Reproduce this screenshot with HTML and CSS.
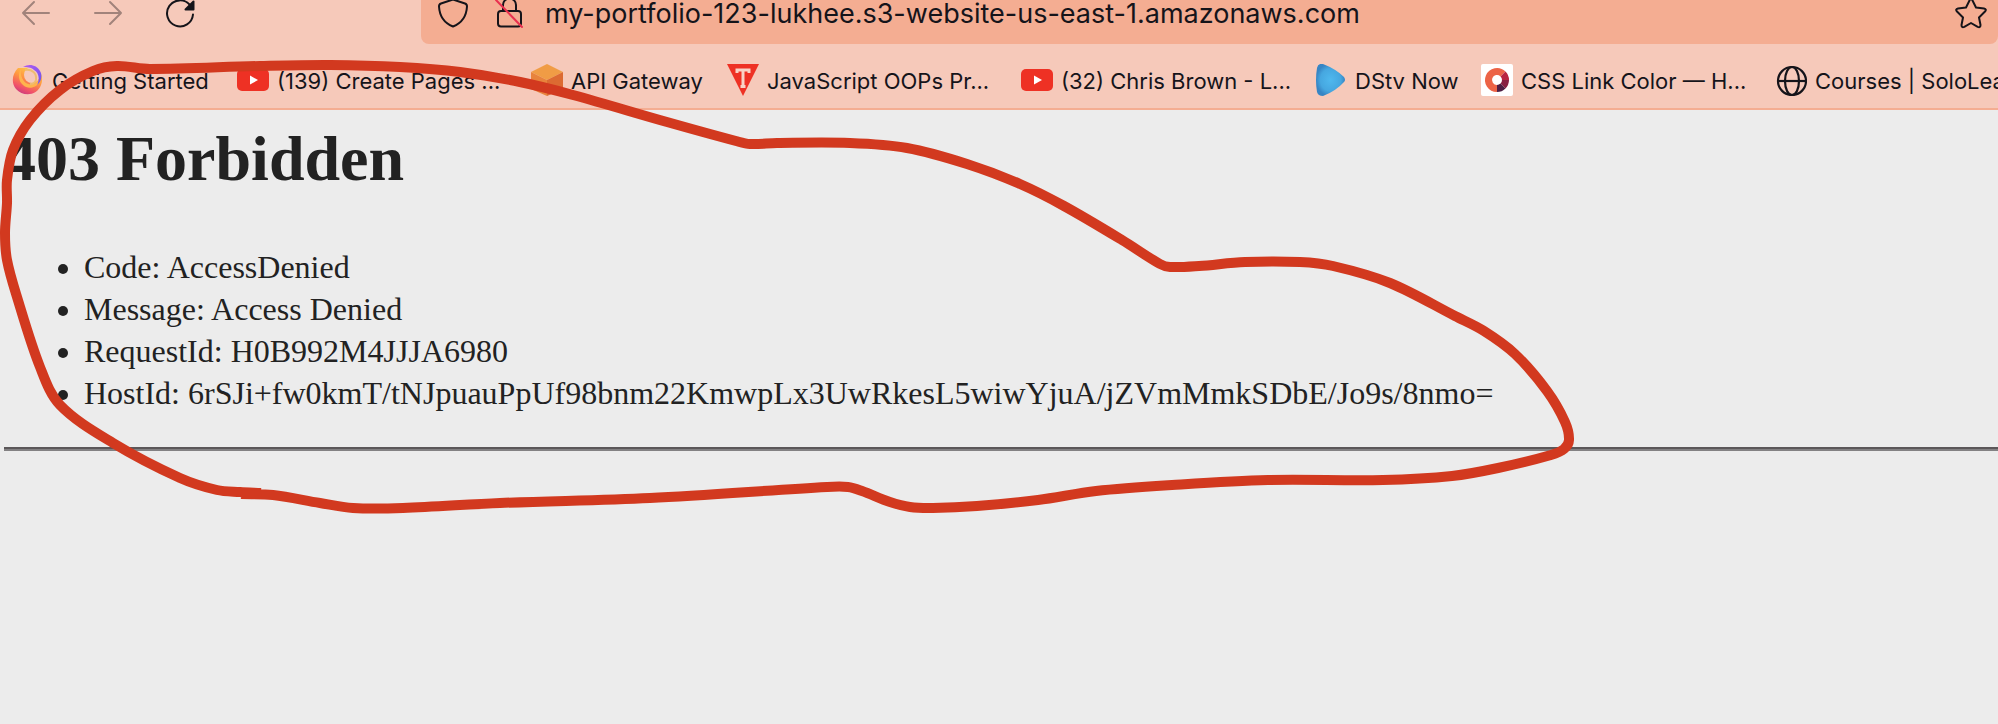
FILE: index.html
```html
<!DOCTYPE html>
<html lang="en">
<head>
<meta charset="utf-8">
<title>403 Forbidden</title>
<link rel="stylesheet" href="styles.css">
</head>
<body>
<header class="chrome">
  <div class="toolbar">
    <nav class="nav" aria-label="History">
      <button class="nav-btn dim" type="button" aria-label="Back"><svg width="32" height="32" viewBox="0 0 32 32"><path d="M29 16H3M14 5L3 16l11 11"/></svg></button>
      <button class="nav-btn dim" type="button" aria-label="Forward"><svg width="32" height="32" viewBox="0 0 32 32"><path d="M3 16h26M18 5l11 11-11 11"/></svg></button>
      <button class="nav-btn" type="button" aria-label="Reload"><svg width="32" height="32" viewBox="0 0 32 32"><path d="M29 17.500A13 13 0 1 1 26 8"/><path class="solid" d="M29.500 4.500v8h-8z"/></svg></button>
    </nav>
    <div class="urlbar">
      <button class="url-btn" type="button" aria-label="Tracking protection"><svg width="32" height="32" viewBox="0 0 32 32"><path d="M16 2.500L28 6.500c1.500.5 2 1.300 2 3C29.500 18 25 26 16 29.500 7 26 2.500 18 2 9.500c0-1.700.5-2.500 2-3z"/></svg></button>
      <button class="url-btn" type="button" aria-label="Connection not secure"><svg width="32" height="32" viewBox="0 0 32 32"><rect x="5" y="14" width="23" height="15.500" rx="3"/><path d="M10 14V8a6.500 6.500 0 0 1 13 0v6"/><path class="slash" d="M3 3l26 27"/></svg></button>
      <input class="url" type="text" aria-label="Address" value="my-portfolio-123-lukhee.s3-website-us-east-1.amazonaws.com">
      <button class="url-btn" type="button" aria-label="Bookmark this page"><svg width="32" height="32" viewBox="0 0 32 32"><path d="M14.500 3.500q1.500-3 3 0l3.500 7 8 1q3 .7 1 3l-6 6 1.500 7.500q0 3-2.800 1.800L16 26l-6.700 3.800q-2.800 1.200-2.800-1.800L8 20.500l-6-6q-2-2.300 1-3l8-1z"/></svg></button>
    </div>
  </div>
  <nav class="bookmarks" aria-label="Bookmarks">
    <a class="bookmark wide" href="#">
      <svg class="icon" width="32" height="32" viewBox="0 0 32 32"><defs><linearGradient id="fox" x1=".8" y1="0" x2=".3" y2="1"><stop offset="0" stop-color="#ffd84a"/><stop offset=".45" stop-color="#ff9640"/><stop offset=".8" stop-color="#f0506a"/><stop offset="1" stop-color="#c93a80"/></linearGradient><linearGradient id="swirl" x1="0" y1="0" x2="1" y2="1"><stop offset="0" stop-color="#b45cf0"/><stop offset="1" stop-color="#6c54f0"/></linearGradient></defs><path fill="url(#fox)" d="M6 4C0 10-1 19 4 25c7 8 21 7 25-4 2-5 1-10-1-13-3-4-12-5-16-4z"/><circle cx="20" cy="11" r="8" fill="#f6c9ba"/><path fill="#ffb44d" d="M9 5c-1 5 1 11 5 14 5 3 10 1 13-4l1 2c-3 7-12 9-17 4C6 17 6 9 9 5z"/><path fill="url(#swirl)" d="M11 3c6-4 14-2 17 4 3 5 1 11-3 14 3-6 2-12-3-15-3-3-7-3-11-3z"/><path d="M13 6c7-1 12 3 11 10-1 3-3 4-6 4" fill="none" stroke="#eebd71" stroke-width="2"/></svg>
      <span>Getting Started</span></a>
    <a class="bookmark long" href="#">
      <svg class="icon" width="32" height="32" viewBox="0 0 32 32"><rect y="5" width="32" height="22" rx="5" fill="#ee3124"/><path d="M13 11.500v9l8-4.500z" fill="#fff"/></svg>
      <span>(139) Create Pages ...</span></a>
    <a class="bookmark mid" href="#">
      <svg class="icon" width="32" height="32" viewBox="0 0 32 32"><path fill="#f09c45" d="M16 0l16 8-16 8L0 8z"/><path fill="#e8833c" d="M0 8l16 8v16L0 25z"/><path fill="#dc6a32" d="M32 8l-16 8v16l16-7z"/></svg>
      <span>API Gateway</span></a>
    <a class="bookmark long" href="#">
      <svg class="icon" width="32" height="32" viewBox="0 0 32 32"><path fill="#ee3124" d="M0 0h32L16 32z"/><path d="M10 9V6h12v3M16 6v17M13.500 22.500h5" fill="none" stroke="#f8d3c6" stroke-width="3"/></svg>
      <span>JavaScript OOPs Pr...</span></a>
    <a class="bookmark long" href="#">
      <svg class="icon" width="32" height="32" viewBox="0 0 32 32"><rect y="5" width="32" height="22" rx="5" fill="#ee3124"/><path d="M13 11.500v9l8-4.500z" fill="#fff"/></svg>
      <span>(32) Chris Brown - L...</span></a>
    <a class="bookmark small" href="#">
      <svg class="icon" width="32" height="32" viewBox="0 0 32 32"><defs><radialGradient id="sky"><stop offset="0" stop-color="#4fb8ee"/><stop offset=".7" stop-color="#46a7e0"/><stop offset="1" stop-color="#3785c4"/></radialGradient></defs><path fill="url(#sky)" d="M2 4q1-5 6-4 13 5 21 13 2 3 0 5Q21 27 8 32q-5 0-6-4Q0 16 2 4z"/></svg>
      <span>DStv Now</span></a>
    <a class="bookmark long" href="#">
      <svg class="icon" width="32" height="32" viewBox="0 0 32 32"><rect width="32" height="32" rx="2" fill="#fff"/><g fill="none" stroke-width="7"><path stroke="#ec6346" d="M16 24.500A8.500 8.500 0 1 1 22 10"/><path stroke="#b9243f" d="M22 10a8.500 8.500 0 0 1 2.500 6"/><path stroke="#871f42" d="M24.500 16a8.500 8.500 0 0 1-2.500 6"/><path stroke="#4c1d43" d="M22 22a8.500 8.500 0 0 1-6 2.500"/></g></svg>
      <span>CSS Link Color — H...</span></a>
    <a class="bookmark" href="#">
      <svg class="icon" width="32" height="32" viewBox="0 0 32 32"><g fill="none" stroke="#15141a" stroke-width="2.200"><circle cx="17" cy="17" r="14"/><ellipse cx="17" cy="17" rx="7" ry="14"/><path d="M3 17h28"/></g></svg>
      <span>Courses | SoloLearn</span></a>
  </nav>
</header>
<main class="page">
  <h1>403 Forbidden</h1>
  <ul>
    <li>Code: AccessDenied</li>
    <li>Message: Access Denied</li>
    <li>RequestId: H0B992M4JJJA6980</li>
    <li>HostId: 6rSJi+fw0kmT/tNJpuauPpUf98bnm22KmwpLx3UwRkesL5wiwYjuA/jZVmMmkSDbE/Jo9s/8nmo=</li>
  </ul>
  <hr>
</main>
<svg class="marker" width="1600" height="540" viewBox="0 0 1600 540" aria-hidden="true"><path id="stroke"/></svg>
<script src="marker.js"></script>
</body>
</html>
```

FILE: styles.css
```css
* {
  box-sizing: border-box;
}

body {
  margin: 0;
  min-height: 100vh;
  position: relative;
  overflow-x: hidden;
  background: #ececec;
  color: #222;
  font-family: "Liberation Serif", "Times New Roman", serif;
  font-size: 32px;
}

.chrome {
  background: #f6c9ba;
  border-bottom: 2px solid #f4ad92;
  color: #15141a;
  font-family: Inter, "Liberation Sans", sans-serif;
}

.toolbar {
  display: flex;
  height: 44px;
}

.nav {
  flex: none;
  display: flex;
  gap: 40px;
  width: 421px;
  height: 26px;
  padding-left: 20px;
  align-items: center;
}

button {
  flex: none;
  width: 32px;
  height: 32px;
  padding: 0;
  border: 0;
  background: none;
  color: inherit;
}

button svg {
  display: block;
  fill: none;
  stroke: currentColor;
  stroke-width: 2;
  stroke-linecap: round;
  stroke-linejoin: round;
}

.dim {
  color: #a1837b;
}

.solid {
  fill: currentColor;
}

.slash {
  stroke: #e9304f;
}

.urlbar {
  flex: 1;
  min-width: 0;
  display: flex;
  align-items: center;
  gap: 20px;
  padding: 0 11px 18px 16px;
  background: #f4ad92;
  border-radius: 0 0 8px 8px;
}

.url-btn + .url-btn {
  margin-left: 4px;
}

.url {
  flex: 1;
  min-width: 0;
  height: 36px;
  padding: 1px 0 0;
  border: 0;
  background: none;
  color: inherit;
  font: 27px/35px Inter, "Liberation Sans", sans-serif;
}

.bookmarks {
  display: flex;
  height: 64px;
  padding: 8px 0 0 12px;
  align-items: center;
  overflow: hidden;
  font-size: 22px;
  line-height: 34px;
}

.bookmark {
  flex: none;
  display: flex;
  gap: 8px;
  height: 32px;
  color: inherit;
  text-decoration: none;
  white-space: nowrap;
}

.icon {
  flex: none;
}

.long {
  width: 294px;
}

.wide {
  width: 225px;
}

.mid {
  width: 196px;
}

.small {
  width: 166px;
}

.page {
  padding: 11px 0 12px 4px;
}

h1 {
  margin: 0;
  font-size: 64px;
  line-height: 76px;
}

ul {
  margin: 49px 0 33px;
  padding-left: 80px;
  line-height: 42px;
}

hr {
  margin: 0;
  border: 0;
  border-top: 2px solid #5b5759;
  border-bottom: 2px solid #838183;
}

.marker {
  position: absolute;
  top: 0;
  left: 0;
  pointer-events: none;
  fill: none;
  stroke: #d2391f;
  stroke-width: 10;
  stroke-linejoin: round;
}
```

FILE: marker.js
```js
// Freehand loop: points along the stroke, joined as a Catmull-Rom curve.
const points = [
  [241, 494], [273, 495], [320, 503], [353, 508], [403, 508], [500, 503],
  [650, 498], [827, 487], [848, 487], [862, 491], [890, 502], [910, 507],
  [933, 508], [977, 506], [1038, 500], [1096, 491], [1172, 485], [1268, 480],
  [1383, 480], [1452, 476], [1498, 468], [1551, 455], [1564, 449], [1569, 440],
  [1565, 422], [1547, 391], [1515, 354], [1484, 331], [1455, 316], [1390, 283],
  [1333, 266], [1300, 262], [1245, 262], [1199, 266], [1170, 267], [1160, 264],
  [1122, 240], [1064, 206], [1020, 184], [967, 164], [907, 148], [850, 143],
  [777, 143], [750, 144], [736, 141], [667, 122], [573, 95], [520, 82],
  [460, 72], [400, 67], [330, 65], [260, 66], [150, 69], [117, 66], [93, 71],
  [60, 90], [30, 120], [13, 150], [7, 180], [7, 203], [5, 233], [7, 260],
  [17, 297], [40, 367], [60, 405], [113, 443], [180, 478], [217, 490],
  [240, 492], [261, 493]
];
let d = "M" + points[0];
for (let i = 0; i < points.length - 1; i++) {
  const a = points[i - 1] || points[i];
  const b = points[i];
  const c = points[i + 1];
  const e = points[i + 2] || c;
  const len = Math.hypot(c[0] - b[0], c[1] - b[1]);
  const before = Math.hypot(c[0] - a[0], c[1] - a[1]);
  const after = Math.hypot(e[0] - b[0], e[1] - b[1]);
  const p = k => b[k] + (c[k] - a[k]) / before * len / 3;
  const q = k => c[k] - (e[k] - b[k]) / after * len / 3;
  d += "C" + [p(0), p(1), q(0), q(1), c[0], c[1]].join(" ");
}
document.getElementById("stroke").setAttribute("d", d);
```
